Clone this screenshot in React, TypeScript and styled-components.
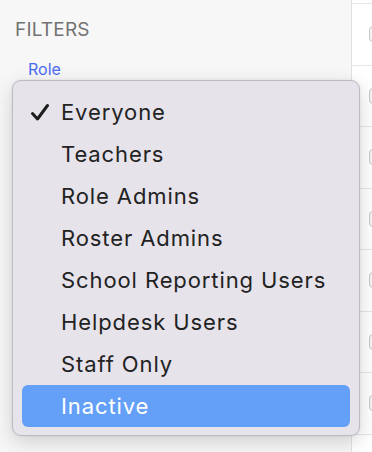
import styled, { createGlobalStyle } from 'styled-components';

const GlobalStyle = createGlobalStyle`
  html, body {
    margin: 0;
    padding: 0;
    width: 100%;
    height: 100%;
    overflow: hidden;
    background: #ffffff;
  }
  #root {
    height: 100%;
  }
`;

const roles = [
  'Everyone',
  'Teachers',
  'Role Admins',
  'Roster Admins',
  'School Reporting Users',
  'Helpdesk Users',
  'Staff Only',
  'Inactive',
];

const selected = 'Everyone';
const highlighted = 'Inactive';

const App = () => {
  return (
    <>
      <GlobalStyle />
      <Page>
        <Sidebar>
          <Heading>FILTERS</Heading>
          <FilterLabel>Role</FilterLabel>
        </Sidebar>
        <List>
          {Array.from({ length: 8 }).map((_, i) => (
            <ListRow key={i}>
              <Checkbox />
            </ListRow>
          ))}
        </List>
        <Menu>
          {roles.map((role) => (
            <MenuItem key={role} $active={role === highlighted}>
              <CheckSlot>
                {role === selected && (
                  <svg width="20" height="19" viewBox="0 0 20 19">
                    <path
                      d="M2.5 10.5 L7.5 16 L17.5 2.5"
                      fill="none"
                      stroke="#1e1e1e"
                      strokeWidth="3"
                      strokeLinecap="round"
                      strokeLinejoin="round"
                    />
                  </svg>
                )}
              </CheckSlot>
              {role}
            </MenuItem>
          ))}
        </Menu>
      </Page>
    </>
  );
};

const Page = styled.div`
  position: relative;
  display: flex;
  width: 100%;
  height: 100%;
  overflow: hidden;
  font-family: Inter, 'Liberation Sans', sans-serif;
`;

const Sidebar = styled.div`
  width: 352px;
  flex-shrink: 0;
  box-sizing: border-box;
  background: #f7f7f7;
  border-right: 1px solid #e2e2e2;
  padding: 18px 0 0 15px;
`;

const Heading = styled.div`
  font-size: 19px;
  font-weight: 400;
  color: #727272;
  letter-spacing: 0.2px;
`;

const FilterLabel = styled.div`
  margin: 18px 0 0 13px;
  font-size: 16px;
  color: #4a6cf3;
`;

const List = styled.div`
  flex: 1;
  height: 100%;
  overflow: hidden;
  padding-top: 3px;
  box-sizing: border-box;
  background: #ffffff;
`;

const ListRow = styled.div`
  height: 61.5px;
  border-top: 1px solid #e6e6e6;
  box-sizing: border-box;
  display: flex;
  align-items: center;
  padding-left: 17px;
`;

const Checkbox = styled.div`
  width: 16px;
  height: 16px;
  flex-shrink: 0;
  box-sizing: border-box;
  border: 1px solid #c9c9c9;
  border-radius: 4px;
  background: #f4f4f4;
`;

const Menu = styled.div`
  position: absolute;
  left: 12px;
  top: 80px;
  width: 348px;
  box-sizing: border-box;
  padding: 10px 0 8px;
  background: #e6e3ea;
  border: 1px solid #bdbbc0;
  border-radius: 9px;
  box-shadow: 0 6px 20px rgba(0, 0, 0, 0.16), 0 0 3px rgba(0, 0, 0, 0.08);
`;

const MenuItem = styled.div<{ $active: boolean }>`
  display: flex;
  align-items: center;
  height: 42px;
  margin: 0 9px;
  padding-left: 8px;
  border-radius: 6px;
  font-size: 22px;
  letter-spacing: 0.9px;
  color: ${({ $active }) => ($active ? '#ffffff' : '#222222')};
  background: ${({ $active }) => ($active ? '#64a0f8' : 'transparent')};
`;

const CheckSlot = styled.span`
  width: 31px;
  flex-shrink: 0;
  display: flex;
  align-items: center;
`;

export default App;
